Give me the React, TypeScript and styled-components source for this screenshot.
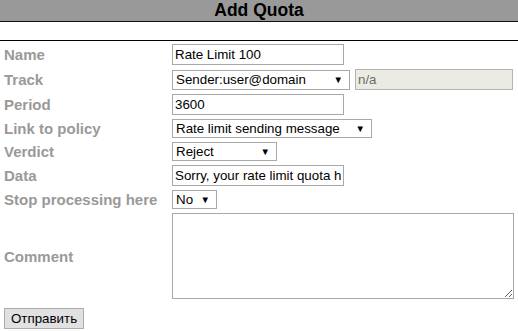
import React from "react";
import styled, { createGlobalStyle } from "styled-components";

const Global = createGlobalStyle`
  html, body { margin: 0; padding: 0; background: #fff; }
  body { font-family: "Liberation Sans", Arial, sans-serif; }
`;

const Page = styled.div`
  width: 518px;
`;

const Header = styled.div`
  height: 21px;
  background: #999999;
  border-bottom: 1px solid #111;
  display: flex;
  align-items: center;
  justify-content: center;
  font-size: 17.5px;
  font-weight: bold;
  color: #000;
`;

const Rule = styled.div`
  margin-top: 18px;
  height: 1px;
  background: #000;
`;

const Form = styled.form`
  display: grid;
  grid-template-columns: 163px 1fr;
  column-gap: 5px;
  row-gap: 4px;
  padding: 3px 4px 0 4px;
  align-items: center;
`;

const Label = styled.label`
  font-size: 15px;
  font-weight: bold;
  color: #999999;
  white-space: nowrap;
  line-height: 17px;
`;

const Field = styled.div`
  display: flex;
  align-items: center;
  gap: 5px;
`;

const TextInput = styled.input<{ $w: number }>`
  box-sizing: border-box;
  width: ${(p) => p.$w}px;
  height: 21px;
  margin: 0;
  padding: 1px 2px;
  border: 1px solid #a9a9a9;
  font-family: "Liberation Sans", Arial, sans-serif;
  font-size: 13.33px;
  color: #000;
  background: #fff;
  outline: none;
  &:disabled {
    background: #ebebe4;
    color: #6d6d6d;
    border-color: #b4b4b4;
  }
`;

const SelectWrap = styled.div<{ $w: number; $h: number }>`
  position: relative;
  width: ${(p) => p.$w}px;
  height: ${(p) => p.$h}px;
  &::after {
    content: "▼";
    position: absolute;
    right: 7px;
    top: 50%;
    transform: translateY(-50%);
    font-size: 9.5px;
    line-height: 1;
    color: #000;
    pointer-events: none;
  }
`;

const Select = styled.select`
  box-sizing: border-box;
  width: 100%;
  height: 100%;
  margin: 0;
  padding: 0 20px 0 3px;
  border: 1px solid #a9a9a9;
  border-radius: 0;
  appearance: none;
  -webkit-appearance: none;
  background: #fff;
  font-family: "Liberation Sans", Arial, sans-serif;
  font-size: 13.33px;
  color: #000;
  outline: none;
`;

const TextArea = styled.textarea`
  box-sizing: border-box;
  width: 342px;
  height: 86px;
  margin: 0;
  border: 1px solid #a9a9a9;
  font-family: "Liberation Mono", monospace;
  font-size: 13px;
  outline: none;
  display: block;
`;

const Submit = styled.button`
  margin: 9px 0 0 4px;
  height: 21px;
  padding: 0 6px;
  background: #e1e1e1;
  border: 1px solid #adadad;
  border-radius: 0;
  font-family: "Liberation Sans", Arial, sans-serif;
  font-size: 13.33px;
  color: #000;
  width: 80px;
`;

function Dropdown({ w, h, value, options }: { w: number; h: number; value: string; options: string[] }) {
  return (
    <SelectWrap $w={w} $h={h}>
      <Select defaultValue={value}>
        {options.map((o) => (
          <option key={o}>{o}</option>
        ))}
      </Select>
    </SelectWrap>
  );
}

export default function App() {
  return (
    <Page>
      <Global />
      <Header>Add Quota</Header>
      <Rule />
      <Form onSubmit={(e) => e.preventDefault()}>
        <Label>Name</Label>
        <Field>
          <TextInput $w={172} defaultValue="Rate Limit 100" />
        </Field>

        <Label>Track</Label>
        <Field>
          <Dropdown w={178} h={20} value="Sender:user@domain" options={["Sender:user@domain"]} />
          <TextInput $w={158} defaultValue="n/a" disabled />
        </Field>

        <Label>Period</Label>
        <Field>
          <TextInput $w={172} defaultValue="3600" />
        </Field>

        <Label>Link to policy</Label>
        <Field>
          <Dropdown w={200} h={19} value="Rate limit sending message" options={["Rate limit sending message"]} />
        </Field>

        <Label>Verdict</Label>
        <Field>
          <Dropdown w={105} h={19} value="Reject" options={["Reject"]} />
        </Field>

        <Label>Data</Label>
        <Field>
          <TextInput $w={172} defaultValue="Sorry, your rate limit quota has been exceeded" />
        </Field>

        <Label>Stop processing here</Label>
        <Field>
          <Dropdown w={45} h={19} value="No" options={["No"]} />
        </Field>

        <Label>Comment</Label>
        <Field>
          <TextArea />
        </Field>
      </Form>
      <Submit type="submit">Отправить</Submit>
    </Page>
  );
}
